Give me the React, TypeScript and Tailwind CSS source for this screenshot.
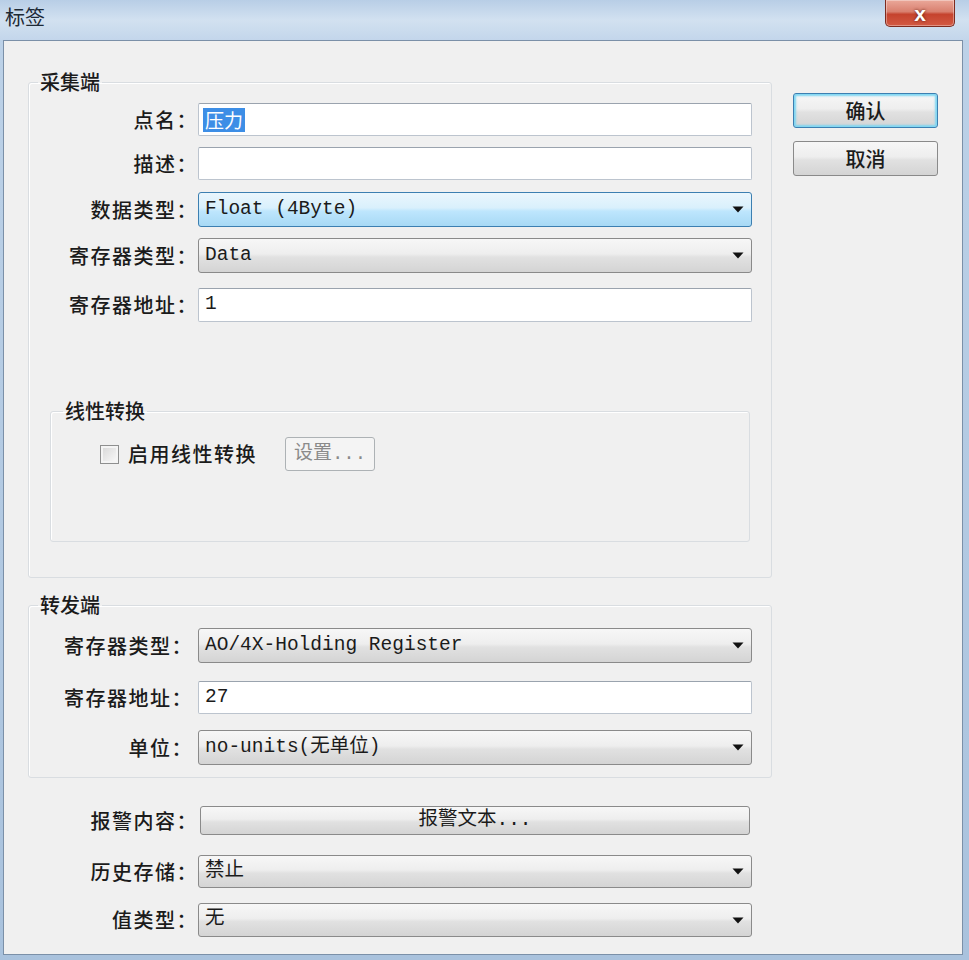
import React from "react";

const comboBg =
  "bg-[linear-gradient(to_bottom,#f7f7f7_0%,#eeeeee_45%,#e1e1e1_55%,#d4d4d4_100%)]";

// little black drop arrow used by every combo box
const Arrow = () => (
  <svg width="12" height="7" viewBox="0 0 12 7" className="shrink-0">
    <path d="M0.5 0.5h11L6 6.5z" fill="#111" />
  </svg>
);

type RowProps = {
  label: string;
  children: React.ReactNode;
  className?: string;
  labelClass?: string;
};

const Row = ({ label, children, className = "", labelClass = "w-[169px]" }: RowProps) => (
  <div className={`flex items-center ${className}`}>
    <span className={`shrink-0 text-right text-[20px] leading-[24px] font-medium tracking-[1.5px] ${labelClass}`}>
      {label}
    </span>
    {children}
  </div>
);

const TextBox = ({ children, h = "h-[33px]" }: { children?: React.ReactNode; h?: string }) => (
  <div
    className={`flex w-[554px] items-center rounded-[2px] border border-[#bcc4ce] border-t-[#9aa3ae] bg-white pl-[6px] font-['Liberation_Mono','Noto_Sans_CJK_SC',monospace] text-[19.5px] ${h}`}
  >
    {children}
  </div>
);

const Combo = ({ value, hot = false, h = "h-[35px]" }: { value: string; hot?: boolean; h?: string }) => (
  <div
    className={`flex w-[554px] items-center justify-between rounded-[3px] border pl-[6px] pr-[7px] font-['Liberation_Mono','Noto_Sans_CJK_SC',monospace] text-[19.5px] ${h} ${
      hot
        ? "border-[#3c7fb1] bg-[linear-gradient(to_bottom,#eaf6fd_0%,#d9f0fc_45%,#bee6fd_55%,#a7d9f5_100%)]"
        : `border-[#8a8a8a] ${comboBg}`
    }`}
  >
    <span className="whitespace-pre">{value}</span>
    <Arrow />
  </div>
);

const App = () => {
  return (
    <div className="h-[960px] w-[969px] overflow-hidden bg-linear-to-b from-[#bdd2e8] to-[#a9c2dd] font-['Noto_Sans_CJK_SC',sans-serif] text-[#1b1b1b]">
      {/* title bar */}
      <div className="flex h-[40px] justify-between bg-linear-to-b from-[#b8cee6] via-[#d2e1f0] to-[#c3d6eb]">
        <span className="ml-[5px] mt-[6px] text-[20px] leading-[22px] text-[#1e2a36]">标签</span>
        <div className="mr-[14px] flex h-[27px] w-[70px] items-center justify-center rounded-b-[5px] border border-t-0 border-[#7d2b1f] bg-[linear-gradient(to_bottom,#eaa89a_0%,#d9806f_45%,#c5432e_55%,#d35a43_100%)] shadow-[inset_0_0_0_1px_rgba(255,255,255,0.35)]">
          <span className="font-['Liberation_Sans',sans-serif] text-[21px] font-bold leading-none text-white [text-shadow:0_0_3px_#5a1a10]">
            x
          </span>
        </div>
      </div>

      {/* client area */}
      <div className="ml-[3px] flex h-[915px] w-[960px] border border-[#7b90a8] bg-[#f0f0f0]">
        {/* left column */}
        <div className="ml-[24px] flex w-[744px] flex-col">
          {/* 采集端 */}
          <fieldset className="mt-[30px] rounded-[3px] border border-[#d9dde1] pb-[35px] shadow-[inset_1px_1px_0_#ffffff]">
            <legend className="ml-[9px] px-[2px] text-[20px] leading-[22px] font-medium">采集端</legend>
            <div className="flex flex-col pt-[10px]">
              <Row label="点名：">
                <TextBox>
                  <span className="ml-[-2px] bg-[#3d8ee6] px-[2px] font-['Noto_Sans_CJK_SC',sans-serif] text-[19px] leading-[24px] text-white">
                    压力
                  </span>
                </TextBox>
              </Row>
              <Row label="描述：" className="mt-[11px]">
                <TextBox />
              </Row>
              <Row label="数据类型：" className="mt-[12px]">
                <Combo value="Float (4Byte)" hot />
              </Row>
              <Row label="寄存器类型：" className="mt-[11px]">
                <Combo value="Data" />
              </Row>
              <Row label="寄存器地址：" className="mt-[15px]">
                <TextBox h="h-[34px]">1</TextBox>
              </Row>

              {/* 线性转换 */}
              <fieldset className="mx-[21px] mt-[78px] rounded-[3px] border border-[#d9dde1] pb-[70px] shadow-[inset_1px_1px_0_#ffffff]">
                <legend className="ml-[12px] px-[2px] text-[20px] leading-[22px] font-medium">线性转换</legend>
                <div className="flex h-[34px] items-center pl-[49px] mt-[15px]">
                  <div className="h-[19px] w-[19px] border border-[#8e8f8f] bg-linear-to-br from-[#d6d6d6] to-[#fbfbfb] shadow-[inset_0_0_0_2px_#f4f4f4]" />
                  <span className="ml-[9px] text-[20px] leading-[24px] font-medium tracking-[1.5px]">启用线性转换</span>
                  <div className="ml-[28px] flex h-[34px] w-[90px] items-center justify-center rounded-[3px] border border-[#adb2b5] bg-[#f4f4f4] font-['Liberation_Mono','Noto_Sans_CJK_SC',monospace] text-[19px] text-[#8a8a8a]">
                    设置...
                  </div>
                </div>
              </fieldset>
            </div>
          </fieldset>

          {/* 转发端 */}
          <fieldset className="mt-[16px] rounded-[3px] border border-[#d9dde1] pb-[12px] shadow-[inset_1px_1px_0_#ffffff]">
            <legend className="ml-[9px] px-[2px] text-[20px] leading-[22px] font-medium">转发端</legend>
            <div className="flex flex-col pt-[12px]">
              <Row label="寄存器类型：" labelClass="w-[169px] pr-[5px]">
                <Combo value="AO/4X-Holding Register" />
              </Row>
              <Row label="寄存器地址：" labelClass="w-[169px] pr-[5px]" className="mt-[18px]">
                <TextBox>27</TextBox>
              </Row>
              <Row label="单位：" labelClass="w-[169px] pr-[5px]" className="mt-[16px]">
                <Combo value="no-units(无单位)" />
              </Row>
            </div>
          </fieldset>

          {/* bottom rows */}
          <Row label="报警内容：" labelClass="w-[170px]" className="mt-[28px]">
            <div className={`ml-[2px] flex h-[29px] w-[550px] items-center justify-center rounded-[3px] border border-[#8a8a8a] font-['Liberation_Mono','Noto_Sans_CJK_SC',monospace] text-[19.5px] ${comboBg}`}>
              报警文本...
            </div>
          </Row>
          <Row label="历史存储：" labelClass="w-[170px]" className="mt-[20px]">
            <Combo value="禁止" h="h-[33px]" />
          </Row>
          <Row label="值类型：" labelClass="w-[170px]" className="mt-[15px]">
            <Combo value="无" h="h-[34px]" />
          </Row>
        </div>

        {/* right column: dialog buttons */}
        <div className="ml-[21px] mt-[52px] flex w-[145px] flex-col">
          <div className={`flex h-[35px] items-center justify-center rounded-[3px] border border-[#3c7fb1] text-[20px] font-medium shadow-[inset_0_0_2px_2px_#7fd6f2] ${comboBg}`}>
            确认
          </div>
          <div className={`mt-[13px] flex h-[35px] items-center justify-center rounded-[3px] border border-[#8a8a8a] text-[20px] font-medium ${comboBg}`}>
            取消
          </div>
        </div>
      </div>
    </div>
  );
};

export default App;
